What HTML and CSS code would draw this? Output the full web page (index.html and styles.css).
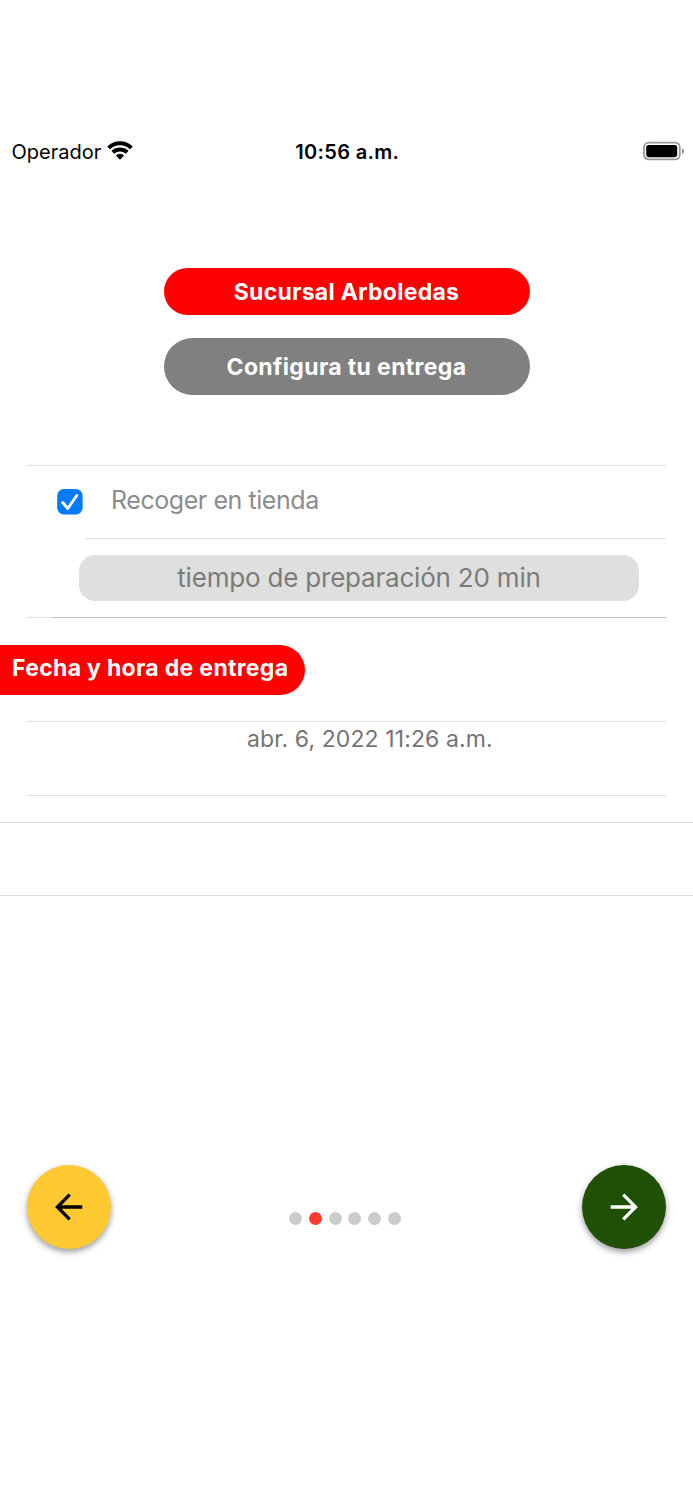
FILE: index.html
```html
<!DOCTYPE html>
<html lang="es">
<head>
<meta charset="utf-8">
<meta name="viewport" content="width=device-width, initial-scale=1">
<title>Configura tu entrega</title>
<link rel="stylesheet" href="styles.css">
</head>
<body>
<header class="status">
  <div class="carrier"><span class="operator">Operador</span>
    <svg class="wifi" viewBox="0 0 26 19" width="26" height="19">
      <g fill="none" stroke="#000" stroke-width="3.9">
        <path d="M1.600 6.800C7.900.7 18.100.7 24.400 6.800"/>
        <path d="M5.800 11.200c4-3.700 10.400-3.700 14.400 0"/>
      </g>
      <path d="M9 14.500c2.300-1.900 5.700-1.900 8 0L13 18.700z"/>
    </svg>
  </div>
  <time class="clock">10:56 a.m.</time>
  <svg class="battery" viewBox="0 0 42 20" width="42" height="20">
    <rect x="1" y="1.6" width="35.8" height="16.8" rx="4.8" fill="#fff" stroke="#999" stroke-width="1.8"/>
    <rect x="3.2" y="3.9" width="31" height="12.3" rx="2.4"/>
    <path d="M39 7.200c2.700 1.100 2.700 4.500 0 5.600z" fill="#888"/>
  </svg>
</header>
<main>
  <div class="pills">
    <div class="pill branch"><span>Sucursal Arboledas</span></div>
    <div class="pill setup"><span>Configura tu entrega</span></div>
  </div>
  <section class="options">
    <label class="pickup">
      <svg class="check" viewBox="0 0 26 26" width="26" height="26">
        <rect x=".2" y=".1" width="25.400" height="25.400" rx="6.600" fill="#007aff"/>
        <path d="M5.700 13.500l5.100 6 9-13" fill="none" stroke="#fff" stroke-width="2.900" stroke-linecap="round" stroke-linejoin="round"/>
      </svg>
      <span class="pickup-text">Recoger en tienda</span>
    </label>
    <div class="prep"><div class="prep-box"><span>tiempo de preparación 20 min</span></div></div>
  </section>
  <h2 class="heading"><span>Fecha y hora de entrega</span></h2>
  <div class="date"><span>abr. 6, 2022 11:26 a.m.</span></div>
  <div class="blank-row"></div>
</main>
<footer class="nav">
  <button class="round back" aria-label="Anterior">
    <svg viewBox="0 0 28 28" width="28" height="28"><path d="M27.300 14H2.500M14.700 1.700L2.400 14l12.300 12.300" fill="none" stroke="#000" stroke-width="3.300"/></svg>
  </button>
  <div class="dots"><i></i><i class="active"></i><i></i><i></i><i></i><i></i></div>
  <button class="round next" aria-label="Siguiente">
    <svg viewBox="0 0 28 28" width="28" height="28"><path d="M.7 14h24.800M13.300 1.700L25.600 14 13.300 26.300" fill="none" stroke="#fff" stroke-width="3.300"/></svg>
  </button>
</footer>
</body>
</html>
```
FILE: styles.css
```css
* { box-sizing: border-box; }
body {
  margin: 0;
  min-height: 1500px;
  padding-top: 136px;
  background: #fff;
  font-family: Inter, "Liberation Sans", sans-serif;
}
svg { display: block; flex: none; }
span, time { white-space: nowrap; }
.status {
  display: grid;
  grid-template-columns: 1fr auto 1fr;
  align-items: center;
  height: 32px;
  padding: 0 8px 0 11.500px;
  font-size: 20px;
}
.carrier { display: flex; align-items: center; gap: 6px; }
.wifi { margin-bottom: 3px; }
.clock { font-weight: 600; letter-spacing: .35px; margin-right: 2px; }
.battery { justify-self: end; margin-bottom: 2px; }
.pills {
  display: flex;
  flex-direction: column;
  align-items: center;
  gap: 23px;
  padding-top: 100px;
}
.pill {
  display: flex;
  align-items: center;
  justify-content: center;
  width: 366px;
  border-radius: 29px;
  color: #fff;
  font-size: 23px;
  font-weight: 700;
}
.branch { height: 47px; background: #f00; letter-spacing: .27px; }
.setup { height: 57px; background: #808080; letter-spacing: .36px; }
.options {
  margin: 70px 27px 0;
  border-top: 1px solid #dfdfdf;
  border-bottom: 1px solid;
  border-image: linear-gradient(to right, #dfdfdf 26px, #c2c2c2 26px) 1;
  border-image-width: 0 0 1px;
  box-shadow: inset 0 1px #dfdfdf;
}
.options { border-top-width: 0; padding-top: 1px; }
.pickup { display: flex; height: 72px; padding: 23px 0 0 30px; }
.pickup-text {
  margin-left: 28px;
  height: 24px;
  line-height: 22px;
  font-size: 25px;
  letter-spacing: -.44px;
  color: #8c8c8c;
}
.prep { display: flow-root; height: 79px; }
.prep::before {
  content: "";
  display: block;
  height: 1px;
  margin-left: 58px;
  background: #dfdfdf;
}
.prep-box {
  display: flex;
  align-items: center;
  justify-content: center;
  width: 560px;
  height: 46px;
  margin: 16px 0 0 52px;
  padding-bottom: 2px;
  border-radius: 16px;
  background: #dfdfdf;
  color: #7b7b7b;
  font-size: 26px;
  letter-spacing: -.2px;
}
.heading {
  display: flex;
  align-items: center;
  width: 305px;
  height: 50px;
  margin: 27px 0 0;
  padding: 0 0 4px 12px;
  border-radius: 0 25px 25px 0;
  background: #f00;
  color: #fff;
  font-size: 23px;
  font-weight: 700;
  letter-spacing: .31px;
}
.date {
  height: 75px;
  margin: 26px 27px 0;
  padding: 3px 0 0 220px;
  border: solid #dfdfdf;
  border-width: 1px 0;
  color: #747474;
  font-size: 23px;
  line-height: 28px;
  letter-spacing: .1px;
}
.blank-row {
  height: 74px;
  margin-top: 26px;
  border: solid #dadada;
  border-width: 1px 0;
}
.nav {
  display: flex;
  justify-content: space-between;
  margin-top: 269px;
  padding: 0 27px;
}
.round {
  display: grid;
  place-items: center;
  width: 84px;
  height: 84px;
  padding: 0;
  border: 0;
  border-radius: 50%;
  box-shadow: 0 3px 6px rgba(0, 0, 0, .4);
}
.back { background: #ffc931; }
.next { background: #205006; }
.dots { display: flex; gap: 6.700px; padding: 47px 3px 0 0; }
.dots i { width: 13px; height: 13px; border-radius: 50%; background: #cbcbcb; }
.dots .active { background: #ff3b30; }
```
